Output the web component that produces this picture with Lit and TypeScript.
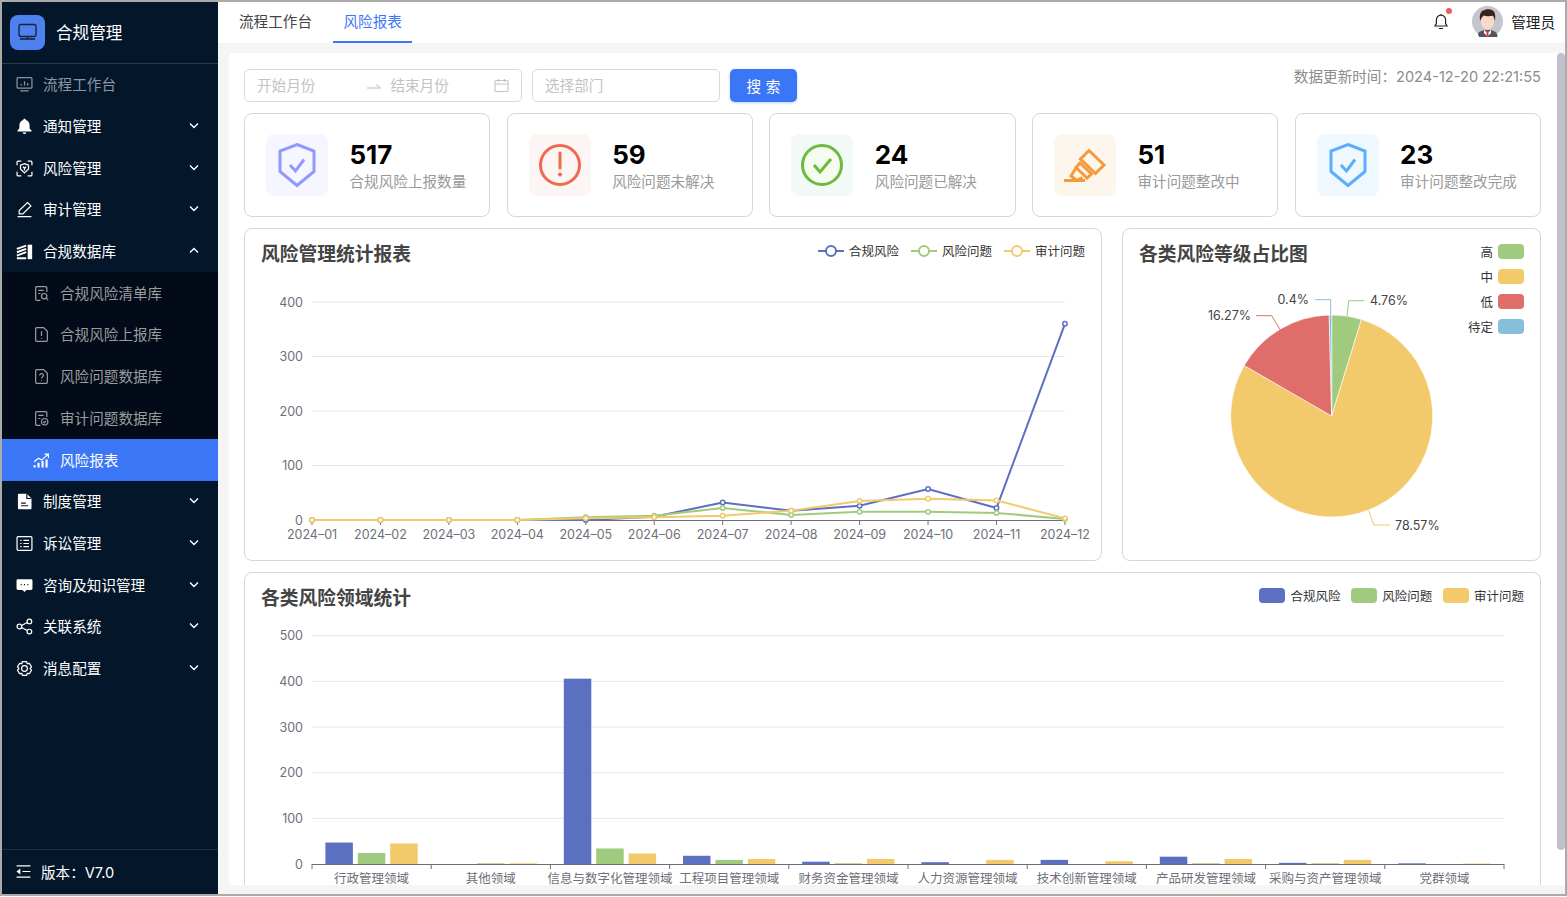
import { LitElement, html, css, svg } from "lit";
import { customElement } from "lit/decorators.js";

const C = { blue: "#5b70c1", green: "#a0cb7f", yellow: "#f2c96b", red: "#df6d69", sky: "#86bfdc" };

const docA = "M13 6.5V2.5a1 1 0 0 0-1-1H3.5a1 1 0 0 0-1 1v11a1 1 0 0 0 1 1H7";
const docB = "M4 1.5h6l3.5 3.5v8.5a1 1 0 0 1-1 1h-9a1 1 0 0 1-1-1v-11a1 1 0 0 1 1-1z";

const icons: Record<string, unknown> = {
  mon: svg`<rect x="1" y="1.5" width="14" height="10" rx="1"/><path d="M5 9V7.5M8 9V5M11 9V6.5M4 14h8"/>`,
  bell: svg`<path class="f" d="M8 .8c-.7 0-1.2.5-1.2 1.1C4.5 2.5 3.2 4.5 3.2 6.8v3L1.4 11.7v1h13.2v-1l-1.8-1.9v-3c0-2.3-1.3-4.3-3.6-4.9C9.2 1.3 8.7.8 8 .8zM6.3 13.6c.2.9.9 1.5 1.7 1.5s1.5-.6 1.7-1.5z"/>`,
  risk: svg`<path d="M1 5V2a1 1 0 0 1 1-1h3M11 1h3a1 1 0 0 1 1 1v3M15 11v3a1 1 0 0 1-1 1h-3M5 15H2a1 1 0 0 1-1-1v-3M8 3.4l3.8 1.4v3.7L8 12.2 4.2 8.5V4.8zM6.5 6.3 8 7.8l1.5-1.5M8 7.8v2"/>`,
  pen: svg`<path d="M10.8 1.4l3.2 3.2-7.6 7.6H3V8.9zM1.5 14.7h13"/>`,
  db: svg`<path stroke-width="1.8" d="M.8 5.6 9.6 2.4M.8 8.7 9.6 5.5M.8 11.8 9.6 8.6M.8 14.4h8.8"/><rect class="f" x="11" y="1.6" width="4.2" height="13.6"/>`,
  s1: svg`<path d="${docA}M5 5h5M5 8h2"/><circle cx="10.5" cy="10.5" r="2.5"/><path d="M12.4 12.4l1.8 1.8"/>`,
  s2: svg`<path d="${docB}M8 5v4.5M8 11.2v.9"/>`,
  s3: svg`<path d="${docB}M6.3 7a1.7 1.7 0 1 1 2.6 1.4c-.6.4-.9.7-.9 1.4M8 11.4v.7"/>`,
  s4: svg`<path d="${docA}M5 5h5M5 8h2"/><circle cx="11" cy="11" r="3"/><path d="M9.7 11l1 1 1.6-1.8"/>`,
  trend: svg`<path stroke-width="2" d="M1.5 14.5v-2M5.2 14.5V10M9 14.5V8.5M12.8 14.5V7"/><path d="M1 9.2l4.2-3.4 3 1.8L14 2.2M10.8 2h3.7v3.6"/>`,
  doc: svg`<path class="f" d="M2.6.8h7.6l4.4 4.4v9.2a.8.8 0 0 1-.8.8H2.6a.8.8 0 0 1-.8-.8V1.6a.8.8 0 0 1 .8-.8z"/><path class="d" d="M4.8 9.6h4.4M4.8 12h6.6M10.2 1v4.2h4.2"/>`,
  list: svg`<rect x="1" y="1.5" width="14" height="13" rx="1"/><path d="M4 5h1.3M7 5h5.2M4 8h1.3M7 8h5.2M4 11h1.3M7 11h5.2"/>`,
  chat: svg`<path class="f" d="M1.8 2h12.4A1.3 1.3 0 0 1 15.5 3.3v7.6a1.3 1.3 0 0 1-1.3 1.3H9.8L8 14.2 6.2 12.2H1.8A1.3 1.3 0 0 1 .5 10.9V3.3A1.3 1.3 0 0 1 1.8 2z"/><path class="d" stroke-width="1.5" d="M4.4 7.2h1M7.5 7.2h1M10.6 7.2h1"/>`,
  share: svg`<circle cx="12.6" cy="3.2" r="2.2"/><circle cx="3.2" cy="8" r="2.2"/><circle cx="12.6" cy="12.8" r="2.2"/><path d="M5.2 7 10.6 4.2M5.2 9l5.4 2.8"/>`,
  gear: svg`<path stroke-linejoin="round" d="M6 .8h4l.6 1.9 2-.4 2 3.4L13.2 7.2 14.6 8.7l-2 3.4-2-.4-.6 1.9H6l-.6-1.9-2 .4-2-3.4 1.4-1.5L1.4 5.7l2-3.4 2 .4z" transform="translate(0 .8)"/><circle cx="8" cy="8" r="2.7"/>`,
  fold: svg`<path d="M1.5 2.8h13M7 8h7.5M1.5 13.2h13"/><path class="f" d="M5 5.2v5.6L1.4 8z"/>`,
};

const ic = (n: string) => html`<svg class="ic" viewBox="0 0 16 16">${icons[n]}</svg>`;
const chev = (up = false) =>
  html`<svg class="chev" viewBox="0 0 10 7"><path d="${up ? "M1 5.5 5 1.5l4 4" : "M1 1.5 5 5.5l4-4"}"/></svg>`;

const menuTop = [
  { t: "流程工作台", i: "mon", dim: true },
  { t: "通知管理", i: "bell", c: 1 },
  { t: "风险管理", i: "risk", c: 1 },
  { t: "审计管理", i: "pen", c: 1 },
  { t: "合规数据库", i: "db", c: 2 },
];
const menuSub = [
  { t: "合规风险清单库", i: "s1" },
  { t: "合规风险上报库", i: "s2" },
  { t: "风险问题数据库", i: "s3" },
  { t: "审计问题数据库", i: "s4" },
  { t: "风险报表", i: "trend", on: true },
];
const menuBottom = [
  { t: "制度管理", i: "doc", c: 1 },
  { t: "诉讼管理", i: "list", c: 1 },
  { t: "咨询及知识管理", i: "chat", c: 1 },
  { t: "关联系统", i: "share", c: 1 },
  { t: "消息配置", i: "gear", c: 1 },
];

const shield = (col: string) => svg`
  <path d="M31 10.5 48 17V37.5L31 51.5 14 37.5V17z" fill="none" stroke="${col}" stroke-width="3"/>
  <path d="M24 31l5.5 6L38 25.5" fill="none" stroke="${col}" stroke-width="3"/>`;

const stats = [
  { n: "517", l: "合规风险上报数量", bg: "#f5f6ff", art: shield("#9299fd") },
  {
    n: "59", l: "风险问题未解决", bg: "#fdf5f3",
    art: svg`<circle cx="31" cy="31" r="19.5" fill="none" stroke="#ee6a4c" stroke-width="3"/><path d="M31 19v15" stroke="#ee6a4c" stroke-width="3" stroke-linecap="round"/><circle cx="31" cy="40.5" r="2" fill="#ee6a4c"/>`,
  },
  {
    n: "24", l: "风险问题已解决", bg: "#f2f9f7",
    art: svg`<circle cx="31" cy="31" r="19.5" fill="#f6fcef" stroke="#6bbb3f" stroke-width="3"/><path d="M23 31l6 7 11-13" fill="none" stroke="#6bbb3f" stroke-width="3"/>`,
  },
  {
    n: "51", l: "审计问题整改中", bg: "#fdf6ec",
    art: svg`<g fill="none" stroke="#f49a3a" stroke-width="3"><path d="M35 16.5 50 31 41.5 39.5 26.5 25z"/><path d="M26 29 37.5 40 33 44 22 33.5zM22 34l-5 8 5.5 4.5 6-3"/><path d="M10 46.5h21"/></g>`,
  },
  { n: "23", l: "审计问题整改完成", bg: "#f0f8ff", art: shield("#5aaeff") },
];

/* line chart, coordinates in page pixels */
const months = ["01", "02", "03", "04", "05", "06", "07", "08", "09", "10", "11", "12"];
const lx = (i: number) => 312 + i * 68.45;
const ly = (v: number) => 520 - v * 0.545;
const lineSeries = [
  { c: C.blue, d: [0, 0, 0, 0, 0, 6, 32, 17, 26, 57, 22, 360] },
  { c: C.green, d: [0, 0, 0, 0, 5, 8, 22, 9, 15, 15, 13, 2] },
  { c: C.yellow, d: [0, 0, 0, 0, 3, 5, 8, 17, 35, 39, 36, 3] },
];

/* bar chart */
const cats = ["行政管理领域", "其他领域", "信息与数字化管理领域", "工程项目管理领域", "财务资金管理领域", "人力资源管理领域", "技术创新管理领域", "产品研发管理领域", "采购与资产管理领域", "党群领域"];
const barData = [
  [47, 24, 45], [0, 1.5, 1.5], [406, 34, 23], [18, 9, 11], [5, 1.5, 11],
  [4, 0, 9], [9, 0, 6], [16, 1.5, 11], [2.5, 1.5, 9], [1.5, 0, 1],
];
const bStep = (1504 - 312) / 10;
const by = (v: number) => 864 - v * 0.4565;

/* pie */
const pie = [
  { p: 4.76, c: C.green, n: "高" },
  { p: 78.57, c: C.yellow, n: "中" },
  { p: 16.27, c: C.red, n: "低" },
  { p: 0.4, c: C.sky, n: "待定" },
];
const PX = 1331.7, PY = 416, PR = 101;
const pt = (pc: number) => {
  const a = (pc / 100) * Math.PI * 2;
  return `${(PX + PR * Math.sin(a)).toFixed(2)} ${(PY - PR * Math.cos(a)).toFixed(2)}`;
};
let acc = 0;
const piePaths = pie.map((s) => {
  const from = acc;
  acc += s.p;
  return { d: `M${PX} ${PY}L${pt(from)}A${PR} ${PR} 0 ${s.p > 50 ? 1 : 0} 1 ${pt(acc)}Z`, c: s.c };
});

@customElement("app-root")
export class AppRoot extends LitElement {
  static styles = css`
    :host { display: block; height: 897px; background: #fff; overflow: hidden;
      font-family: Inter, "Noto Sans CJK SC", sans-serif; font-size: 14.6px; color: #333; }
    * { box-sizing: border-box; }
    .frame { height: 896px; border: 2px solid #ababab; display: flex; position: relative; overflow: hidden; }

    .side { width: 216px; flex: none; background: #03162a; color: #fff; display: flex; flex-direction: column; }
    .brand { height: 62px; flex: none; border-bottom: 1px solid #2a3b4d; display: flex; align-items: center; gap: 11px; padding: 0 0 1px 8px; font-size: 16.6px; }
    .logo { width: 35px; height: 35px; border-radius: 8px; background: #4f80ef; display: flex; align-items: center; justify-content: center; }
    .logo svg { width: 21px; height: 21px; fill: none; stroke: #17233a; stroke-width: 1.4; }
    .item { height: 41.7px; display: flex; align-items: center; padding-left: 14px; gap: 10px; flex: none; position: relative; }
    .item span { margin-bottom: 2px; }
    .item.dim { color: #8d97a3; }
    .ic { width: 17px; height: 17px; flex: none; fill: none; stroke: currentColor; stroke-width: 1.15; }
    .ic .f { fill: currentColor; stroke: none; }
    .ic .d { stroke: #03162a; stroke-width: 1.1; }
    .chev { width: 10px; height: 7px; margin-left: auto; margin-right: 19px; fill: none; stroke: #fff; stroke-width: 1.4; transform: translateY(-1px); }
    .subs { background: #020b17; flex: none; }
    .sub { padding-left: 31px; color: #9b9c9f; }
    .sub.on { background: #3b76f6; color: #fff; }
    .foot { margin-top: auto; height: 45px; border-top: 1px solid #1f3042; display: flex; align-items: center; gap: 9px; padding: 0 0 2px 13px; flex: none; }

    .main { flex: 1; min-width: 0; display: flex; flex-direction: column; background: #f5f5f5; }
    .top { height: 41px; background: #fff; flex: none; display: flex; align-items: stretch; padding-left: 11px; gap: 11px; }
    .tab { padding: 0 10px 2px; display: flex; align-items: center; color: #444; border-bottom: 2px solid transparent; }
    .tab.on { color: #3b76f6; border-bottom-color: #3b76f6; padding: 0 10.5px 2px; }
    .user { margin-left: auto; display: flex; align-items: center; gap: 8px; padding: 0 10px 2px 0; color: #222; }
    .bellbox { position: relative; width: 16px; height: 18px; margin-right: 15px; }
    .bellbox svg { width: 16px; height: 18px; fill: none; stroke: #222; stroke-width: 1.2; display: block; }
    .dot { position: absolute; width: 6px; height: 6px; border-radius: 50%; background: #f05a5a; top: -5px; right: -3px; }
    .avatar { width: 31px; height: 31px; display: block; }

    .body { flex: 1; min-height: 0; padding: 10px 0 9px 11px; }
    .page { height: 100%; background: #fff; border-radius: 4px 0 0 4px; padding: 16px 24px 0 15px; overflow: hidden; }
    .thumb { position: absolute; right: 0; top: 51px; width: 8.5px; height: 797px; background: #bfc2ca; border-radius: 4px; }

    .filters { display: flex; gap: 10px; height: 33px; margin-bottom: 11px; }
    .field { border: 1px solid #d9d9d9; border-radius: 5px; display: flex; align-items: center; color: #c3c3c3; padding: 0 12px 2px; height: 33px; }
    .range { width: 278px; }
    .range .arrow { width: 14px; height: 8px; margin: 2px 9px 0 52px; fill: none; stroke: #bbb; stroke-width: 1; }
    .range .cal { width: 15px; height: 15px; margin: 2px 0 0 auto; fill: none; stroke: #c3c3c3; stroke-width: 1.1; }
    .dept { width: 188px; }
    .btn { width: 67px; height: 33px; background: #3b76f6; color: #fff; border-radius: 5px; display: flex; align-items: center; justify-content: center; box-shadow: 0 1px 3px rgba(59,118,246,.35); letter-spacing: 0.3px; }
    .updated { margin-left: auto; color: #8c8c8c; line-height: 17px; }

    .stats { display: grid; grid-template-columns: repeat(5, 1fr); gap: 16.25px; margin-bottom: 11px; }
    .stat { height: 104px; border: 1px solid #d6d6d6; border-radius: 8px; display: flex; align-items: center; padding-left: 21px; gap: 21.5px; }
    .box { width: 62px; height: 62px; border-radius: 8px; flex: none; }
    .box svg { width: 62px; height: 62px; display: block; }
    .txt { padding-top: 2px; }
    .num { font-size: 26px; font-weight: 700; color: #000; line-height: 30px; }
    .lab { color: #999; line-height: 22px; margin-top: 1px; white-space: nowrap; }

    .charts { display: grid; grid-template-columns: 858fr 419fr; gap: 20px; margin-bottom: 11px; }
    .card { border: 1px solid #d6d6d6; border-radius: 8px; position: relative; }
    .charts .card { height: 333px; }
    .wide { height: 340px; }
    .head { height: 50px; display: flex; align-items: center; padding: 0 16px; justify-content: space-between; }
    .title { font-size: 18.75px; font-weight: 700; color: #444; white-space: nowrap; margin-bottom: 4px; }
    .chart { display: block; }
    .chart text { font-family: Inter, "Noto Sans CJK SC", sans-serif; font-size: 12.5px; fill: #6e7079; }
    .chart text.pl { fill: #444; }
    .grid { stroke: #e6e8f0; stroke-width: 1; }
    .axis { stroke: #6e7079; stroke-width: 1; fill: none; }

    .legend { display: flex; gap: 12px; font-size: 12.5px; color: #333; margin-bottom: 7px; }
    .legend.bars { gap: 10.75px; margin-bottom: 5px; }
    .leg { display: flex; align-items: center; gap: 5px; white-space: nowrap; }
    .leg svg { width: 26px; height: 14px; display: block; }
    .sw { width: 26px; height: 15px; border-radius: 4px; flex: none; }
    .vleg { position: absolute; right: 16px; top: 15px; display: flex; flex-direction: column; gap: 10px; font-size: 12.5px; color: #333; }
    .vleg .leg { justify-content: flex-end; height: 15px; }
  `;

  private renderLine() {
    const grid = [0, 100, 200, 300, 400];
    return html`<svg class="chart" width="856" height="282" viewBox="245 279 856 282">
      ${grid.slice(1).map((v) => svg`<line class="grid" x1="312" x2="1065" y1="${ly(v)}" y2="${ly(v)}"/>`)}
      ${grid.map((v) => svg`<text x="303" y="${ly(v) + 4.5}" text-anchor="end">${v}</text>`)}
      <line class="axis" x1="312" x2="1065" y1="520.5" y2="520.5"/>
      ${months.map((m, i) => svg`
        <line class="axis" x1="${lx(i)}" x2="${lx(i)}" y1="520" y2="525"/>
        <text x="${lx(i)}" y="539" text-anchor="middle">2024–${m}</text>`)}
      ${lineSeries.map((s) => svg`
        <polyline fill="none" stroke="${s.c}" stroke-width="2" points="${s.d.map((v, i) => `${lx(i)},${ly(v)}`).join(" ")}"/>
        ${s.d.map((v, i) => svg`<circle cx="${lx(i)}" cy="${ly(v)}" r="2.2" fill="#fff" stroke="${s.c}" stroke-width="1.5"/>`)}`)}
    </svg>`;
  }

  private renderPie() {
    const lab = (pts: string, c: string, x: number, y: number, t: string, anchor: string) => svg`
      <polyline points="${pts}" fill="none" stroke="${c}" stroke-width="1"/>
      <text class="pl" x="${x}" y="${y}" text-anchor="${anchor}">${t}</text>`;
    return html`<svg class="chart" width="417" height="282" viewBox="1123 279 417 282">
      ${piePaths.map((p) => svg`<path d="${p.d}" fill="${p.c}" stroke="#fff" stroke-width="0.6"/>`)}
      ${lab("1347,316 1348.7,300.7 1364,300.7", C.green, 1370, 305, "4.76%", "start")}
      ${lab("1330.7,315 1330.7,299.7 1315,299.7", C.sky, 1309, 304, "0.4%", "end")}
      ${lab("1280,329.5 1271.7,315.7 1256,315.7", C.red, 1251, 320, "16.27%", "end")}
      ${lab("1368.7,510.7 1374,525 1390,525", C.yellow, 1395, 529.5, "78.57%", "start")}
    </svg>`;
  }

  private renderBars() {
    const grid = [0, 100, 200, 300, 400, 500];
    const cols = [C.blue, C.green, C.yellow];
    return html`<svg class="chart" width="1295" height="270" viewBox="245 623 1295 270">
      ${grid.slice(1).map((v) => svg`<line class="grid" x1="312" x2="1504" y1="${by(v)}" y2="${by(v)}"/>`)}
      ${grid.map((v) => svg`<text x="303" y="${by(v) + 4.5}" text-anchor="end">${v}</text>`)}
      ${barData.map((g, i) => g.map((v, j) => v > 0
        ? svg`<rect x="${312 + i * bStep + 13.4 + j * 32.4}" y="${by(v)}" width="27.5" height="${v * 0.4565}" fill="${cols[j]}"/>`
        : null))}
      <line class="axis" x1="312" x2="1504" y1="864.5" y2="864.5"/>
      ${cats.map((c, i) => svg`<text x="${312 + (i + 0.5) * bStep}" y="883" text-anchor="middle">${c}</text>`)}
      ${Array.from({ length: 11 }, (_, i) => svg`<line class="axis" x1="${312 + i * bStep}" x2="${312 + i * bStep}" y1="864" y2="869"/>`)}
    </svg>`;
  }

  render() {
    const item = (m: any, cls = "") => html`<div class="item ${cls} ${m.dim ? "dim" : ""} ${m.on ? "on" : ""}">
      ${ic(m.i)}<span>${m.t}</span>${m.c ? chev(m.c === 2) : null}
    </div>`;
    return html`<div class="frame">
      <aside class="side">
        <div class="brand">
          <div class="logo"><svg viewBox="0 0 21 21"><rect x="2" y="2.5" width="17" height="12" rx="2"/><path d="M3 17h15" stroke-width="1.6"/><path d="M10.5 14.5V17"/></svg></div>
          <span>合规管理</span>
        </div>
        ${menuTop.map((m) => item(m))}
        <div class="subs">${menuSub.map((m) => item(m, "sub"))}</div>
        ${menuBottom.map((m) => item(m))}
        <div class="foot">${ic("fold")}<span>版本：V7.0</span></div>
      </aside>
      <div class="main">
        <div class="top">
          <div class="tab">流程工作台</div>
          <div class="tab on">风险报表</div>
          <div class="user">
            <div class="bellbox">
              <svg viewBox="0 0 16 18"><path d="M8 2.2c-2.9 0-4.6 2.2-4.6 4.8v3.6L2 13h12l-1.4-2.4V7c0-2.6-1.7-4.8-4.6-4.8zM8 1v1.2M6 15.5h4"/></svg>
              <span class="dot"></span>
            </div>
            <svg class="avatar" viewBox="0 0 31 31">
              <circle cx="15.5" cy="15.5" r="15.5" fill="#c5c5d0"/>
              <path d="M5.5 31c0-5 3-7 10-7s10 2 10 7z" fill="#55555c" clip-path="circle(15.5px at 15.5px 0px)"/>
              <path d="M12 24l3.5 3 3.5-3v3l-3.5 3.5L12 27z" fill="#fff"/>
              <path d="M14.7 25h1.6l.4 5.5h-2.4z" fill="#e23b3b"/>
              <ellipse cx="15.5" cy="15" rx="6.8" ry="8.6" fill="#f8d8c6"/>
              <path d="M8.2 15C6.8 8 9.5 3.8 12.5 4.3 14.5 2.4 22 3 22.8 7.5c.6 2.5.6 5 0 7.5-.4-2.5-1-4.3-2-5.2-3 .7-7 .5-9-.3-1.5 1-2.8 3-3.6 5.5z" fill="#3a2318"/>
            </svg>
            <span>管理员</span>
          </div>
        </div>
        <div class="body">
          <div class="page">
            <div class="filters">
              <div class="field range">
                <span>开始月份</span>
                <svg class="arrow" viewBox="0 0 14 8"><path d="M0 6h13.5L9 2.5"/></svg>
                <span>结束月份</span>
                <svg class="cal" viewBox="0 0 15 15"><rect x="1" y="2.5" width="13" height="11" rx="1"/><path d="M1 6h13M4.5 1v3M10.5 1v3"/></svg>
              </div>
              <div class="field dept">选择部门</div>
              <div class="btn">搜 索</div>
              <div class="updated">数据更新时间：2024-12-20 22:21:55</div>
            </div>
            <div class="stats">
              ${stats.map((s) => html`<div class="stat">
                <div class="box" style="background:${s.bg}"><svg viewBox="0 0 62 62">${s.art}</svg></div>
                <div class="txt"><div class="num">${s.n}</div><div class="lab">${s.l}</div></div>
              </div>`)}
            </div>
            <div class="charts">
              <div class="card">
                <div class="head">
                  <span class="title">风险管理统计报表</span>
                  <div class="legend">
                    ${lineSeries.map((s, i) => html`<div class="leg">
                      <svg viewBox="0 0 26 14"><path d="M0 7h26" stroke="${s.c}" stroke-width="2"/><circle cx="13" cy="7" r="5" fill="#fff" stroke="${s.c}" stroke-width="2"/></svg>
                      <span>${["合规风险", "风险问题", "审计问题"][i]}</span>
                    </div>`)}
                  </div>
                </div>
                ${this.renderLine()}
              </div>
              <div class="card">
                <div class="head"><span class="title">各类风险等级占比图</span></div>
                <div class="vleg">
                  ${pie.map((s) => html`<div class="leg"><span>${s.n}</span><span class="sw" style="background:${s.c}"></span></div>`)}
                </div>
                ${this.renderPie()}
              </div>
            </div>
            <div class="card wide">
              <div class="head">
                <span class="title">各类风险领域统计</span>
                <div class="legend bars">
                  ${[C.blue, C.green, C.yellow].map((c, i) => html`<div class="leg">
                    <span class="sw" style="background:${c}"></span>
                    <span>${["合规风险", "风险问题", "审计问题"][i]}</span>
                  </div>`)}
                </div>
              </div>
              ${this.renderBars()}
            </div>
          </div>
        </div>
      </div>
      <div class="thumb"></div>
    </div>`;
  }
}
